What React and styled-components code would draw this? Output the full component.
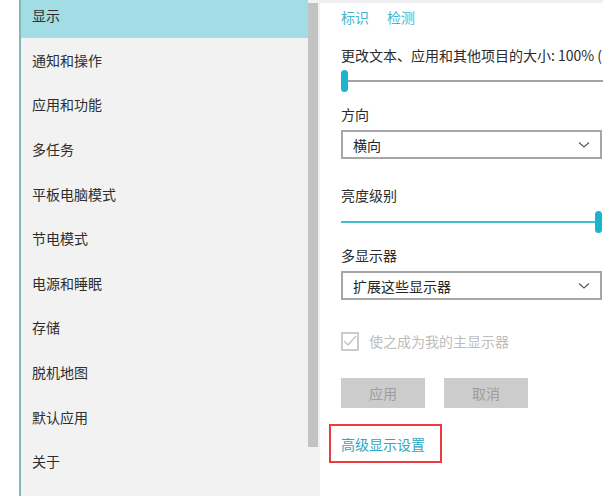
import React from "react";
import styled, { createGlobalStyle } from "styled-components";

const GlobalStyle = createGlobalStyle`
  html, body {
    margin: 0;
    padding: 0;
    background: #ffffff;
  }
  body {
    font-family: "Noto Sans CJK SC", "Noto Sans", sans-serif;
    font-size: 14px;
    color: #2b2b2b;
  }
`;

const Window = styled.div`
  display: flex;
  width: 603px;
  height: 496px;
  overflow: hidden;
  background: #ffffff;
`;

const Gutter = styled.div`
  width: 19px;
  flex-shrink: 0;
  background: #ffffff;
  border-right: 2px solid #84b6be;
`;

const Sidebar = styled.div`
  display: flex;
  width: 299px;
  flex-shrink: 0;
  background: #f2f2f2;
`;

const NavList = styled.ul`
  list-style-type: none;
  margin: -7px 0 0 0;
  padding: 0;
  width: 287px;
`;

const NavItem = styled.li`
  display: flex;
  align-items: center;
  height: 44.6px;
  padding-left: 11px;
  background: ${(p) => (p.$active ? "#a2dce4" : "transparent")};
  color: #2e2e2e;
  font-size: 14px;
`;

const ScrollTrack = styled.div`
  width: 12px;
  flex-shrink: 0;
  padding-top: 3px;
`;

const ScrollThumb = styled.div`
  width: 10px;
  height: 444px;
  background: #c3c3c3;
`;

const Content = styled.div`
  flex: 1;
  display: flex;
  flex-direction: column;
  padding-left: 21px;
  border-top: 3px solid #efefef;
  min-width: 0;
  overflow: hidden;
`;

const LinksRow = styled.div`
  display: flex;
  gap: 18px;
  margin-top: 4px;
  line-height: 20px;
`;

const Link = styled.a`
  color: ${(p) => (p.$strong ? "#2fa6c2" : "#47b6cd")};
  text-decoration: none;
  font-size: 14px;
`;

const Label = styled.div`
  line-height: 20px;
  white-space: nowrap;
  margin-top: ${(p) => p.$mt}px;
`;

const SliderBox = styled.div`
  position: relative;
  height: 22px;
  width: ${(p) => p.$width}px;
  margin-top: ${(p) => p.$mt}px;
`;

const Track = styled.div`
  position: absolute;
  left: 0;
  right: 0;
  top: 10px;
  height: 2px;
  background: ${(p) => p.$color};
`;

const Thumb = styled.div`
  position: absolute;
  top: 0;
  width: 7px;
  height: 22px;
  border-radius: 4px;
  background: #1cb3cc;
`;

const Select = styled.div`
  display: flex;
  align-items: center;
  justify-content: space-between;
  box-sizing: border-box;
  width: 261px;
  height: 29px;
  margin-top: ${(p) => p.$mt}px;
  padding: 0 10px 0 10px;
  border: 2px solid #a6a6a6;
  background: #ffffff;
  font-size: 14px;
  color: #262626;
`;

const CheckRow = styled.div`
  display: flex;
  align-items: center;
  gap: 10px;
  margin-top: 31px;
  height: 20px;
  color: #bdbdbd;
`;

const CheckBox = styled.div`
  box-sizing: border-box;
  width: 18px;
  height: 19px;
  border: 2px solid #cbcbcb;
  display: flex;
  align-items: center;
  justify-content: center;
`;

const ButtonRow = styled.div`
  display: flex;
  gap: 19px;
  margin-top: 27px;
`;

const Button = styled.button`
  width: 84px;
  height: 30px;
  border: none;
  background: #cccccc;
  color: #9d9d9d;
  font-family: inherit;
  font-size: 14px;
  padding: 0;
`;

const Highlight = styled.div`
  box-sizing: border-box;
  width: 113px;
  height: 39px;
  margin-top: 16px;
  margin-left: -12px;
  padding-left: 10px;
  border: 2px solid #ea3b3f;
  display: flex;
  align-items: center;
`;

const Chevron = () => (
  <svg width="12" height="8" viewBox="0 0 12 8">
    <path d="M1 1.5 L6 6 L11 1.5" fill="none" stroke="#5a5a5a" strokeWidth="1.2" />
  </svg>
);

const navItems = [
  "显示",
  "通知和操作",
  "应用和功能",
  "多任务",
  "平板电脑模式",
  "节电模式",
  "电源和睡眠",
  "存储",
  "脱机地图",
  "默认应用",
  "关于",
];

export default function App() {
  return (
    <>
      <GlobalStyle />
      <Window>
        <Gutter />
        <Sidebar>
          <NavList>
            {navItems.map((name, i) => (
              <NavItem key={name} $active={i === 0}>
                {name}
              </NavItem>
            ))}
          </NavList>
          <ScrollTrack>
            <ScrollThumb />
          </ScrollTrack>
        </Sidebar>
        <Content>
          <LinksRow>
            <Link>标识</Link>
            <Link>检测</Link>
          </LinksRow>

          <Label $mt={18}>更改文本、应用和其他项目的大小: 100% (</Label>
          <SliderBox $width={262} $mt={5}>
            <Track $color="#a3a3a3" style={{ left: 7 }} />
            <Thumb style={{ left: 0 }} />
          </SliderBox>

          <Label $mt={12}>方向</Label>
          <Select $mt={6}>
            <span>横向</span>
            <Chevron />
          </Select>

          <Label $mt={26}>亮度级别</Label>
          <SliderBox $width={261} $mt={6}>
            <Track $color="#3dbfd3" style={{ right: 6 }} />
            <Thumb style={{ left: 254 }} />
          </SliderBox>

          <Label $mt={12}>多显示器</Label>
          <Select $mt={6}>
            <span>扩展这些显示器</span>
            <Chevron />
          </Select>

          <CheckRow>
            <CheckBox>
              <svg width="14" height="12" viewBox="0 0 14 12">
                <path d="M1 6 L5 10 L13 1" fill="none" stroke="#c4c4c4" strokeWidth="1.5" />
              </svg>
            </CheckBox>
            <span>使之成为我的主显示器</span>
          </CheckRow>

          <ButtonRow>
            <Button disabled>应用</Button>
            <Button disabled>取消</Button>
          </ButtonRow>

          <Highlight>
            <Link $strong>高级显示设置</Link>
          </Highlight>
        </Content>
      </Window>
    </>
  );
}
